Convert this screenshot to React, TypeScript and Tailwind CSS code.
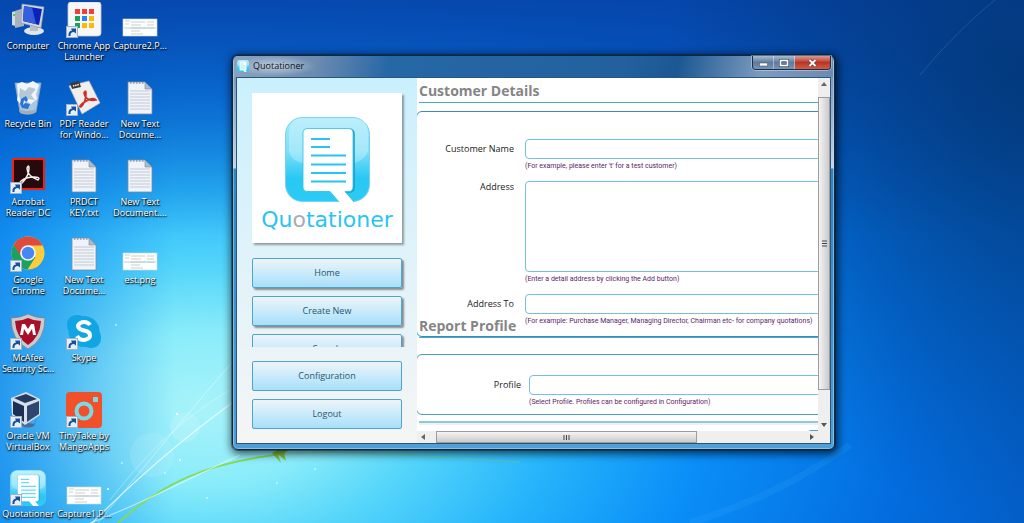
import type { ReactNode } from "react"

type Shortcut = {
  label: string[]
  icon: ReactNode
  linked?: boolean
}

function Wallpaper() {
  return (
    <>
      <div className="absolute inset-0 bg-[radial-gradient(ellipse_90%_112%_at_20%_78%,#a8f3fa_0%,#8aecfa_13%,#54d5fa_24%,#26b4fb_38%,#0a8ef8_54%,#036ddf_76%,#0455ba_100%)]" />
      <div className="absolute inset-0 bg-[linear-gradient(90deg,rgba(0,110,230,0.6)_0%,rgba(0,120,230,0)_17%)]" />
      <div className="absolute inset-0 bg-[linear-gradient(180deg,rgba(6,65,165,0.85)_0%,rgba(8,80,180,0)_45%)]" />
      <div className="absolute inset-0 bg-[radial-gradient(ellipse_35%_85%_at_100%_15%,rgba(2,50,100,0.65)_0%,rgba(2,50,120,0)_100%)]" />
      <svg
        className="absolute inset-0 h-full w-full"
        viewBox="0 0 1024 523"
        preserveAspectRatio="none"
        fill="none"
        aria-hidden="true"
      >
        <path d="M118 523C160 485 205 462 285 454 350 449 420 456 520 462" stroke="#7fdd4a" strokeWidth="1.5" opacity=".25" />
        <path d="M118 523C160 485 205 462 285 454" stroke="#86dc50" strokeWidth="1.6" />
        <path d="M272 453l9 10-3-9 8 7-2-8 5-3-6-3" fill="#7fc43a" />
        <path d="M92 523C150 465 200 425 250 390" stroke="#fff" strokeWidth="1.3" opacity=".7" />
        <path d="M90 523C140 505 185 480 240 455" stroke="#fff" strokeWidth="1.2" opacity=".55" />
        <path d="M98 523C150 460 190 410 260 330" stroke="#fff" opacity=".4" />
        <path d="M110 500C150 450 180 420 230 390" stroke="#fff" opacity=".3" />
        <path d="M690 523C760 500 800 480 850 445" stroke="#5cc8ff" strokeWidth="7" opacity=".1" />
        <path d="M920 75C945 45 970 20 995 0" stroke="#7fb6e0" opacity=".2" />
        <g fill="#fff">
          <circle cx="185" cy="427" r="15" opacity=".14" />
          <circle cx="152" cy="455" r="22" opacity=".1" />
          <circle cx="177" cy="414" r="1.2" />
          <circle cx="180" cy="460" r="1.2" />
          <circle cx="108" cy="489" r="1" />
          <circle cx="116" cy="325" r=".8" />
          <circle cx="165" cy="473" r=".8" />
          <circle cx="207" cy="498" r=".8" />
          <circle cx="315" cy="469" r=".8" />
          <circle cx="122" cy="463" r=".8" />
          <circle cx="277" cy="483" r=".8" />
        </g>
      </svg>
    </>
  )
}

function LogoMark({ className, id }: { className?: string; id: string }) {
  return (
    <svg className={className} viewBox="0 0 85 85" aria-hidden="true">
      <defs>
        <linearGradient id={id} x2="0" y2="1">
          <stop offset="0" stopColor="#a3e9fa" />
          <stop offset=".4" stopColor="#80dff8" />
          <stop offset=".72" stopColor="#29c8f4" />
          <stop offset="1" stopColor="#2acbf5" />
        </linearGradient>
      </defs>
      <rect x=".5" y=".5" width="84" height="84" rx="17" fill={`url(#${id})`} stroke="#78d3f3" />
      <path d="M17 1h51q15 0 15 16v17q-5 12-18 12H20Q7 46 4 34V17Q4 1 17 1Z" fill="#fff" opacity=".28" />
      <path d="M65 12q4 1 4 5v53q0 5-5 5h-4" fill="none" stroke="#149fc4" strokeWidth="1.6" />
      <path
        d="M22 11.5h42q4 0 4 4v54q0 5-4 5h-4L69 85H54l-9-10.500H22q-4 0-4-4v-55q0-4 4-4Z"
        fill="#fff"
      />
      <path d="M54 85l-9-10.500H22q-4 0-4-4v-55q0-4 4-4h42q4 0 4 4v54q0 5-4 5h-4L69 85" fill="none" stroke="#2bbfe9" strokeWidth=".8" />
      <path d="M26 22h19M26 30h19M26 38.500h35M26 47.500h35M26 56h35M26 64.500h35" stroke="#29c4f1" strokeWidth="2" />
    </svg>
  )
}

function ComputerIcon() {
  return (
    <svg className="h-9 w-9" viewBox="0 0 36 36">
      <path d="M2 10l7-2v17l-7-2z" fill="#d9dde3" />
      <path d="M5 9l9-3v18l-9 2z" fill="#aab2bd" />
      <path d="M3 12h2v2H3z" fill="#43d43c" />
      <ellipse cx="24" cy="29" rx="10" ry="4" fill="#dfe5ea" />
      <path d="M20 22h8v7h-8z" fill="#b7c0c9" />
      <path d="M12 2l22 3-3 21-20-5z" fill="#cfd6dd" stroke="#8f9aa6" strokeWidth=".6" />
      <path d="M14 4l18 3-3 16-16-4z" fill="#0d22b8" />
      <path d="M14 4l8 1.500 4 16.500-13-3z" fill="#3560dd" />
    </svg>
  )
}

function BinIcon() {
  return (
    <svg className="h-9 w-9" viewBox="0 0 36 36">
      <path d="M5 3l26 0-5 29q-8 4-16 0z" fill="#c4dbe9" fillOpacity=".85" stroke="#8ca7b8" strokeWidth=".8" />
      <path d="M7 4l5-2 5 2 6-3 6 4-3 9 1 5-6 5-5-3-5 4-4-5 1-6z" fill="#eff5f9" />
      <path d="M10 8l5 3 4-4 7 2-5 6 4 5-7-1-6 4-3-7z" fill="#b4c8d6" />
      <path d="M11 19l5-3 2 4-3 3 5 1-2 5-6-1-2-4z" fill="#2b74d3" />
      <path d="M14 20l2 2-3 3z" fill="#e3eef6" />
      <path d="M9 29q9 4 17 0l-1 4q-8 3-15 0z" fill="#a2adb5" />
    </svg>
  )
}

function AppLauncherIcon() {
  const colors = ["#f43d3d", "#f43d3d", "#f43d3d", "#1aa25c", "#2b82f6", "#fdb90b", "#1aa25c", "#fdb90b", "#fdb90b"]
  return (
    <svg className="h-9 w-9" viewBox="0 0 36 36">
      <rect x="2" y="0" width="33" height="34" rx="3" fill="#f7f7f7" stroke="#c9c9c9" strokeWidth=".8" />
      {colors.map((c, i) => (
        <rect key={i} x={9 + (i % 3) * 7} y={7 + Math.floor(i / 3) * 7} width="5" height="5" fill={c} />
      ))}
    </svg>
  )
}

function PdfIcon() {
  return (
    <svg className="h-9 w-9" viewBox="0 0 36 36">
      <path d="M3 6l20-5 11 22-18 11z" fill="#f1efee" stroke="#bdb8b6" strokeWidth=".7" />
      <path d="M4 3l9-2 2 6-9 2z" fill="#3b3b3b" />
      <path d="M7 6l6-1.500" fill="none" stroke="#fff" strokeWidth="1.500" strokeDasharray="1.500 .7" />
      <path d="M15 27q5-5 5-14 0-4-2 0 2 9 12 7-3-4-13 3-5 4-2 4Z" fill="none" stroke="#c8312c" strokeWidth="1.700" />
    </svg>
  )
}

function AcrobatIcon() {
  return (
    <svg className="h-9 w-9" viewBox="0 0 36 36">
      <rect x="3" y="1" width="31" height="30" fill="#270a0e" stroke="#f0220e" strokeWidth="2" />
      <path
        d="M12 25q7-7 7-15 0-4-2 0 0 8 11 12 3-3-4-3-8 0-13 4-3 4 1 2Z"
        fill="none"
        stroke="#f4f0ef"
        strokeWidth="1.500"
      />
    </svg>
  )
}

function TextFileIcon() {
  return (
    <svg className="h-9 w-9" viewBox="0 0 36 36">
      <path d="M6 2h17l7 7v25H6z" fill="#f0f3f7" stroke="#7e8a99" strokeWidth=".8" />
      <path d="M23 2l7 7h-7z" fill="#aebac8" stroke="#7e8a99" strokeWidth=".6" />
      <path d="M8 3h14" stroke="#8b97a5" strokeWidth="1.500" strokeDasharray="1.500 1.500" />
      <path d="M8 11h20M8 14h20M8 17h20M8 20h20M8 23h20M8 26h20M8 29h20" stroke="#bcc6d2" strokeWidth=".9" />
    </svg>
  )
}

function ChromeIcon() {
  return (
    <svg className="h-9 w-9" viewBox="0 0 36 36">
      <circle cx="18" cy="17" r="16.500" fill="#fbcd3c" />
      <path d="M3.700 8.800A16.500 16.500 0 0 1 32.600 9.500L18 9.500 10 21.500z" fill="#dd4b3e" />
      <path d="M3.700 8.800A16.500 16.500 0 0 0 17.500 33.500L25.500 21 12 22z" fill="#1da160" />
      <circle cx="18" cy="17" r="7.800" fill="#f3f5f8" />
      <circle cx="18" cy="17" r="6.200" fill="#4587f3" />
    </svg>
  )
}

function McAfeeIcon() {
  return (
    <svg className="h-9 w-9" viewBox="0 0 36 36">
      <path d="M1 4q9 0 17-4 8 4 17 4 0 22-17 31Q1 26 1 4Z" fill="#c8ccd0" stroke="#7a8086" strokeWidth=".8" />
      <path d="M5 7q7 0 13-3 6 3 13 3-1 16-13 24Q6 23 5 7Z" fill="#a90f28" />
      <path d="M10 21l2-11h3l3 5 3-5h3l2 11h-3l-1-6-4 6-4-6-1 6z" fill="#fff" />
    </svg>
  )
}

function SkypeIcon() {
  return (
    <svg className="h-9 w-9" viewBox="0 0 36 36">
      <rect x="1" y="1" width="20" height="20" rx="9" fill="#12a5e4" />
      <rect x="15" y="14" width="20" height="20" rx="9" fill="#12a5e4" />
      <circle cx="18" cy="17.500" r="15.500" fill="#12a5e4" />
      <path
        d="M24 11q-2-3-6-3t-6 3.500q0 3 4 4.500l4 1q4 1 4 4.500T18 26q-5 0-7-4"
        fill="none"
        stroke="#fff"
        strokeWidth="4"
      />
    </svg>
  )
}

function VirtualBoxIcon() {
  return (
    <svg className="h-9 w-9" viewBox="0 0 36 36">
      <path d="M12 30l12 2 3-6-3 8q-6 3-12 0z" fill="#516a91" />
      <path d="M1 6L16 0l14 7v16L15 33 2 23z" fill="#d6dfeb" />
      <path d="M4 6l12-4 11 5-12 4z" fill="#243a61" />
      <path d="M3 9l11 5v16L3 22z" fill="#1c3054" />
      <path d="M17 14l12-5v13l-12 8z" fill="#2f4770" />
    </svg>
  )
}

function TinyTakeIcon() {
  return (
    <svg className="h-9 w-9" viewBox="0 0 36 36">
      <rect width="36" height="36" rx="4" fill="#f15029" />
      <circle cx="18" cy="19" r="7.500" fill="none" stroke="#79d9e8" strokeWidth="4" />
      <rect x="27" y="5" width="5" height="5" fill="#79d9e8" />
    </svg>
  )
}

function CaptureIcon() {
  return (
    <svg className="h-9 w-9" viewBox="0 0 36 36">
      <rect x="1" y="17" width="34" height="17" fill="#fdfdfd" stroke="#d4d9dd" strokeWidth=".6" />
      <path d="M3 19h5M9 20h14M25 20h7M9 23h10M25 23h7M3 22h4M9 26h15M25 26h7M9 29h9M9 32h12" stroke="#b9b9a8" strokeWidth=".9" opacity=".7" />
      <path d="M2 26h32" stroke="#9dc7e6" strokeWidth=".8" />
    </svg>
  )
}

function ShortcutArrow() {
  return (
    <svg className="absolute bottom-0 left-0 h-3 w-3" viewBox="0 0 12 12">
      <rect x=".5" y=".5" width="11" height="11" fill="#e4eff8" stroke="#9eb4c6" />
      <path d="M2.500 10Q2 5 6 4.500L5 2.500h5v5L8 6Q4 6 4.500 10z" fill="#1c4f9b" />
    </svg>
  )
}

const shortcuts: Shortcut[] = [
  { label: ["Computer"], icon: <ComputerIcon /> },
  { label: ["Recycle Bin"], icon: <BinIcon /> },
  { label: ["Acrobat", "Reader DC"], icon: <AcrobatIcon />, linked: true },
  { label: ["Google", "Chrome"], icon: <ChromeIcon />, linked: true },
  { label: ["McAfee", "Security Sc..."], icon: <McAfeeIcon />, linked: true },
  { label: ["Oracle VM", "VirtualBox"], icon: <VirtualBoxIcon />, linked: true },
  { label: ["Quotationer"], icon: <LogoMark id="mark-desktop" className="h-9 w-9" />, linked: true },
  { label: ["Chrome App", "Launcher"], icon: <AppLauncherIcon />, linked: true },
  { label: ["PDF Reader", "for Windo..."], icon: <PdfIcon />, linked: true },
  { label: ["PRDCT", "KEY.txt"], icon: <TextFileIcon /> },
  { label: ["New Text", "Docume..."], icon: <TextFileIcon /> },
  { label: ["Skype"], icon: <SkypeIcon />, linked: true },
  { label: ["TinyTake by", "MangoApps"], icon: <TinyTakeIcon />, linked: true },
  { label: ["Capture1.P..."], icon: <CaptureIcon /> },
  { label: ["Capture2.P..."], icon: <CaptureIcon /> },
  { label: ["New Text", "Docume..."], icon: <TextFileIcon /> },
  { label: ["New Text", "Document...."], icon: <TextFileIcon /> },
  { label: ["est.png"], icon: <CaptureIcon /> },
]

function DesktopIcon({ label, icon, linked }: Shortcut) {
  return (
    <button className="flex h-[78px] w-14 flex-col items-center gap-0.5 pt-0.5 whitespace-nowrap text-[9px] leading-[11px] text-white [text-shadow:0_1px_2px_#000,1px_1px_1px_#000c]">
      <span className="relative block">
        {icon}
        {linked && <ShortcutArrow />}
      </span>
      <span>
        {label.map((line) => (
          <span key={line} className="block">{line}</span>
        ))}
      </span>
    </button>
  )
}

function TitleBar() {
  const caption = "flex items-center justify-center border-r border-white/40"
  return (
    <header className="flex h-[21px] shrink-0 items-start justify-between">
      <div className="flex h-[20px] items-center gap-1 bg-[radial-gradient(ellipse_at_center,rgba(255,255,255,0.5)_0%,rgba(255,255,255,0)_72%)] pr-3 pl-px">
        <LogoMark id="mark-title" className="h-3 w-3" />
        <h1 className="text-[9px] leading-[12px] text-[#0c1520]">Quotationer</h1>
      </div>
      <div className="flex h-[14px] overflow-hidden rounded-b border border-t-0 border-[#1d2f47] shadow-[0_0_0_1px_#ffffff55]">
        <button aria-label="Minimize" className={`${caption} w-[21px] bg-linear-to-b from-[#a9bbd0] via-[#5d7ba0] to-[#7993b3]`}>
          <svg className="mt-1 h-[5px] w-[9px]" viewBox="0 0 9 5">
            <rect x=".5" y="1" width="8" height="3" fill="#fff" stroke="#4d5b6c" strokeWidth=".6" />
          </svg>
        </button>
        <button aria-label="Maximize" className={`${caption} w-[21px] bg-linear-to-b from-[#a9bbd0] via-[#5d7ba0] to-[#7993b3]`}>
          <svg className="h-2 w-[10px]" viewBox="0 0 10 8">
            <rect x="1.500" y="1.500" width="7" height="5" fill="none" stroke="#414e60" strokeWidth="3" />
            <rect x="1.500" y="1.500" width="7" height="5" fill="none" stroke="#fff" strokeWidth="1.600" />
          </svg>
        </button>
        <button aria-label="Close" className="flex w-[35px] items-center justify-center bg-linear-to-b from-[#d99a92] via-[#b93425] to-[#cf5c45]">
          <svg className="h-2 w-[9px]" viewBox="0 0 9 8">
            <path d="M1.500 1l6 6M7.500 1l-6 6" stroke="#53231d" strokeWidth="3" />
            <path d="M1.500 1l6 6M7.500 1l-6 6" stroke="#fff" strokeWidth="2" />
          </svg>
        </button>
      </div>
    </header>
  )
}

function NavButton({ children, raised }: { children: ReactNode; raised?: boolean }) {
  return (
    <button
      className={`h-[30px] w-full shrink-0 rounded-xs border border-[#4da5cd] bg-linear-to-b from-[#eef4f7] via-[#c9ebfb] to-[#a9def9] text-[9px] text-[#2b566b] ${
        raised ? "shadow-[2px_2px_2px_#0000006b]" : ""
      }`}
    >
      {children}
    </button>
  )
}

function Sidebar() {
  return (
    <aside className="flex w-[180px] shrink-0 flex-col bg-linear-to-b from-[#caf0fd] to-[#f5f5f5] pt-[15px] pb-[14px]">
      <div className="mx-[15px] flex h-[150px] flex-col items-center bg-white pt-6 shadow-[2px_2px_2px_#0000005c]">
        <LogoMark id="mark-card" className="h-[85px] w-[85px]" />
        <p className="mt-1 font-['DejaVu_Sans'] text-[22px] leading-[28px] text-[#29c4f1]">
          Qu<span className="text-[#a9adb1]">o</span>tationer
        </p>
      </div>
      <nav className="mt-2 mb-[14px] flex min-h-0 flex-1 flex-col gap-2 overflow-hidden px-[15px] pt-[7px]">
        <NavButton raised>Home</NavButton>
        <NavButton raised>Create New</NavButton>
        <NavButton raised>Search</NavButton>
      </nav>
      <div className="flex flex-col gap-2 px-[15px]">
        <NavButton>Configuration</NavButton>
        <NavButton>Logout</NavButton>
      </div>
    </aside>
  )
}

const fieldBox = "w-full rounded border border-[#74bfdf] bg-white text-[9px] outline-none"
const fieldLabel = "text-right text-[9px] leading-[12px] text-[#222]"
const fieldHint = "pt-[3px] font-['Roboto','Open_Sans',sans-serif] text-[7px] leading-[9px] text-[#5d2468]"

function SectionTitle({ children }: { children: ReactNode }) {
  return (
    <h2 className="ml-[2px] h-[25px] border-b border-[#42a9d2] text-[14px] leading-[25px] font-bold text-[#858585]">
      {children}
    </h2>
  )
}

function CustomerForm() {
  return (
    <form className="w-[571px]">
      <SectionTitle>Customer Details</SectionTitle>
      <fieldset className="-ml-px mt-2 grid h-[226px] grid-cols-[97px_1fr] content-start gap-x-[11px] rounded-md border border-[#3a8cb8] pt-[27px]">
        <label htmlFor="customer-name" className={`${fieldLabel} pt-1`}>Customer Name</label>
        <div className="h-[42px]">
          <input id="customer-name" className={`${fieldBox} block h-[20px] px-1`} />
          <p className={fieldHint}>(For example, please enter 't' for a test customer)</p>
        </div>
        <label htmlFor="address" className={fieldLabel}>Address</label>
        <div className="h-[113px]">
          <textarea id="address" className={`${fieldBox} block h-[91px] resize-none px-1`} />
          <p className={fieldHint}>(Enter a detail address by clicking the Add button)</p>
        </div>
        <label htmlFor="address-to" className={`${fieldLabel} pt-1`}>Address To</label>
        <div>
          <input id="address-to" className={`${fieldBox} block h-[20px] px-1`} />
          <p className={fieldHint}>(For example: Purchase Manager, Managing Director, Chairman etc- for company quotations)</p>
        </div>
      </fieldset>
      {/* the title sits on the bottom edge of the fieldset above */}
      <div className="-mt-6">
        <SectionTitle>Report Profile</SectionTitle>
      </div>
      <fieldset className="-ml-px mt-4 grid h-[61px] grid-cols-[104px_1fr] content-start gap-x-2 rounded-md border border-[#4a9cc5] pt-5">
        <label htmlFor="profile" className={`${fieldLabel} pt-1`}>Profile</label>
        <div>
          <input id="profile" className={`${fieldBox} block h-[20px] px-1`} />
          <p className={fieldHint}>(Select Profile. Profiles can be configured in Configuration)</p>
        </div>
      </fieldset>
      <hr className="mt-[6px] ml-[2px] h-1 border-t-2 border-[#8cc8e2] bg-[#f0f0f0]" />
      <button type="button" aria-label="Add" className="mt-[5px] ml-[390px] block h-[24px] w-[80px] rounded border border-[#4da5cd] bg-[#c9ebfb]" />
    </form>
  )
}

function VerticalScrollbar() {
  return (
    <div className="flex w-[12px] shrink-0 flex-col items-center justify-between bg-[#efefef] py-1">
      <svg className="h-[4px] w-[6px] shrink-0" viewBox="0 0 6 4"><path d="M0 4l3-4 3 4z" fill="#666" /></svg>
      <div className="mt-[11px] mb-[33px] flex w-full flex-1 items-center justify-center border border-[#9c9c9c] bg-linear-to-r from-[#f4f4f4] to-[#cbcbcb]">
        <svg className="h-[7px] w-[5px]" viewBox="0 0 5 7"><path d="M0 1h5M0 3.500h5M0 6h5" stroke="#444" strokeWidth="1" /></svg>
      </div>
      <svg className="h-[4px] w-[6px] shrink-0" viewBox="0 0 6 4"><path d="M0 0l3 4 3-4z" fill="#555" /></svg>
    </div>
  )
}

function HorizontalScrollbar() {
  return (
    <div className="flex h-[12px] shrink-0 items-center bg-[#efefef] px-1">
      <svg className="h-[6px] w-[4px] shrink-0" viewBox="0 0 4 6"><path d="M4 0L0 3l4 3z" fill="#666" /></svg>
      <div className="mx-[11px] flex h-full flex-1 items-center">
        <div className="flex h-full w-[72%] items-center justify-center border border-[#9c9c9c] bg-linear-to-b from-[#f4f4f4] to-[#cbcbcb]">
          <svg className="h-[5px] w-[7px]" viewBox="0 0 7 5"><path d="M1 0v5M3.500 0v5M6 0v5" stroke="#444" strokeWidth="1" /></svg>
        </div>
      </div>
      <svg className="h-[6px] w-[4px] shrink-0" viewBox="0 0 4 6"><path d="M0 0l4 3-4 3z" fill="#555" /></svg>
    </div>
  )
}

function QuotationerWindow() {
  return (
    <section className="absolute top-[55px] right-[189px] bottom-[73px] left-[232px] flex flex-col rounded-md border border-[#12263c] bg-[linear-gradient(180deg,#8fa5c0_0px,#7f9cc0_25px,#c5d6e8_112px,#2b86c4_113px,#4f9fd8_100%)] px-[3px] pb-[5px] shadow-[0_0_0_1px_#0a1a2e66,1px_2px_9px_2px_#000000a6,inset_0_0_0_1px_#c2e0f580]">
      <div className="-mx-[2px] -mb-[21px] h-[21px] shrink-0 rounded-t bg-[linear-gradient(100deg,#8aa3c0_0%,#6b8bb0_14%,#2667a6_26%,#22619e_65%,#1c5893_74%,#7c9bbe_88%,#6c8bb0_100%)]" />
      <div className="relative flex min-h-0 flex-1 flex-col">
        <TitleBar />
        <div className="flex min-h-0 flex-1 border border-[#2b567c] bg-white">
          <Sidebar />
          <main className="flex min-w-0 flex-1 flex-col">
            <div className="min-h-0 flex-1 overflow-hidden">
              <CustomerForm />
            </div>
            <HorizontalScrollbar />
          </main>
          <div className="flex bg-[#efefef] pb-3">
            <VerticalScrollbar />
          </div>
        </div>
      </div>
    </section>
  )
}

export default function App() {
  return (
    <div className="relative min-h-screen overflow-hidden bg-[#0a5bbd] font-['Open_Sans','Noto_Sans',sans-serif]">
      <Wallpaper />
      <div className="relative grid h-screen grid-flow-col grid-rows-[repeat(7,78px)] justify-start overflow-hidden">
        {shortcuts.map((s, i) => (
          <DesktopIcon key={i} {...s} />
        ))}
      </div>
      <QuotationerWindow />
    </div>
  )
}
